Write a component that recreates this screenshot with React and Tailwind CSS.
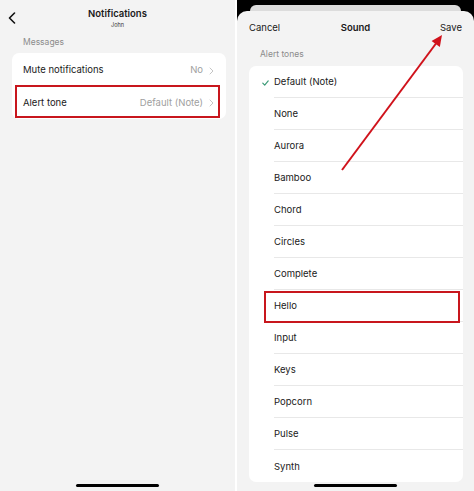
import React from "react";

const tones = ["Default (Note)", "None", "Aurora", "Bamboo", "Chord", "Circles", "Complete", "Hello", "Input", "Keys", "Popcorn", "Pulse", "Synth"];

const Chevron = ({ className }) => (
    <svg className={className} width="5" height="8" viewBox="0 0 5 8" fill="none">
        <path d="M1 1l3 3-3 3" stroke="#c4c4c4" strokeWidth="1" strokeLinecap="round" strokeLinejoin="round" />
    </svg>
);

const HomeBar = () => (
    <div className="flex justify-center pb-[4px]">
        <div className="w-[83px] h-[3px] rounded-full bg-black" />
    </div>
);

const App = () => {
    return (
        <div className="flex w-[474px] h-[491px] overflow-hidden bg-white font-['Inter','Liberation_Sans',sans-serif] text-[#1a1a1a]">
            {/* LEFT: NOTIFICATIONS */}
            <div className="w-[235px] h-full bg-[#f3f3f3] flex flex-col">
                <div className="grid grid-cols-[1fr_auto_1fr] h-[32px]">
                    <div className="pl-[8px] pt-[12px]">
                        <svg width="8" height="12" viewBox="0 0 8 12" fill="none">
                            <path d="M6.5 1L1.5 6l5 5" stroke="#111" strokeWidth="1.6" strokeLinecap="round" strokeLinejoin="round" />
                        </svg>
                    </div>
                    <div className="flex flex-col items-center pt-[8px]">
                        <div className="text-[9.5px] leading-[12px] font-semibold">Notifications</div>
                        <div className="text-[5.5px] leading-[7px] mt-[2px] text-[#333]">John</div>
                    </div>
                    <div />
                </div>
                <div className="pl-[23px] pt-[5px] text-[8.5px] leading-[11px] text-[#8c8c8c]">Messages</div>
                <div className="ml-[12px] w-[214px] mt-[5px] bg-white rounded-[7px]">
                    <div className="flex items-center h-[33px] pl-[11px] pr-[12px] pt-[2px] text-[9.5px]">
                        <span className="flex-1">Mute notifications</span>
                        <span className="text-[#a0a0a0] mr-[6px]">No</span>
                        <Chevron />
                    </div>
                    <div className="relative flex items-center h-[33px] pl-[11px] pr-[12px] pt-[1px] text-[9.5px]">
                        <span className="flex-1">Alert tone</span>
                        <span className="text-[#a0a0a0] mr-[6px]">Default (Note)</span>
                        <Chevron />
                        <div className="absolute left-[3px] right-[6px] top-[-1px] bottom-[1px] border-2 border-[#c8161d]" />
                    </div>
                </div>
                <div className="flex-1" />
                <HomeBar />
            </div>

            <div className="w-[2px] bg-white" />

            {/* RIGHT: SOUND SHEET */}
            <div className="relative w-[237px] h-full bg-black flex flex-col">
                <div className="h-[11px] pt-[5px] px-[13px]">
                    <div className="h-[6px] bg-[#dcdcdc] rounded-t-[8px]" />
                </div>
                <div className="flex-1 bg-[#f3f3f3] rounded-t-[10px] flex flex-col">
                    <div className="grid grid-cols-[1fr_auto_1fr] items-center h-[33px] pt-[1px] px-[12px] text-[9.5px]">
                        <span>Cancel</span>
                        <span className="font-semibold">Sound</span>
                        <span className="text-right">Save</span>
                    </div>
                    <div className="pl-[23px] pt-[5px] pb-[6px] text-[8.5px] leading-[11px] text-[#8c8c8c]">Alert tones</div>
                    <div className="ml-[12px] w-[214px] bg-white rounded-[7px]">
                        {tones.map((t, i) => (
                            <div key={t} className="relative flex h-[32px] pl-[13px] text-[9.5px]">
                                <div className="w-[12px] flex items-center pt-[2px]">
                                    {i === 0 && (
                                        <svg width="7" height="6" viewBox="0 0 7 6" fill="none">
                                            <path d="M0.8 3.2l1.9 1.9L6.2 0.9" stroke="#3d9b78" strokeWidth="1.2" strokeLinecap="round" strokeLinejoin="round" />
                                        </svg>
                                    )}
                                </div>
                                <div className={"flex-1 flex items-center pt-[2px] " + (i < tones.length - 1 ? "border-b border-[#e8e8e8]" : "")}>
                                    {t}
                                </div>
                                {t === "Hello" && (
                                    <div className="absolute left-[15px] right-[3px] top-[1px] bottom-[-1px] border-2 border-[#c8161d]" />
                                )}
                            </div>
                        ))}
                    </div>
                    <div className="flex-1" />
                    <HomeBar />
                </div>

                {/* red arrow to Save */}
                <svg className="absolute left-0 top-0 pointer-events-none" width="237" height="491" viewBox="0 0 237 491" fill="none">
                    <line x1="105" y1="170" x2="199" y2="43.5" stroke="#d0121b" strokeWidth="2" />
                    <polygon points="205,35 202.8,47 194.6,41" fill="#d0121b" />
                </svg>
            </div>
        </div>
    );
};

export default App;
